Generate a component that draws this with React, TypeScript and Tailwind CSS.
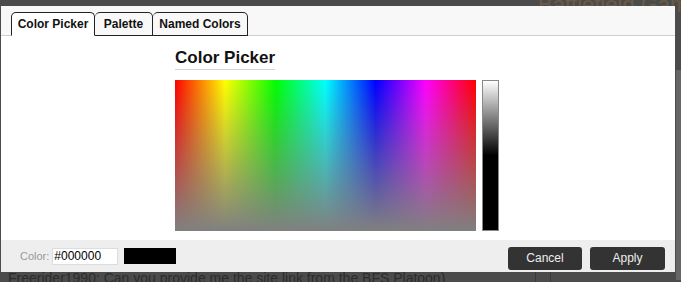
import { useState } from "react";

const tabs = [
  { label: "Color Picker", w: "w-[84px]" },
  { label: "Palette", w: "w-[58px]" },
  { label: "Named Colors", w: "w-[95px]" },
];

const App = () => {
  const [active, setActive] = useState(0);
  const [hex, setHex] = useState("#000000");

  return (
    <div className="relative w-[681px] h-[282px] overflow-hidden bg-[#4b4b4b] font-['Liberation_Sans',Arial,sans-serif]">
      {/* page behind the modal */}
      <div className="absolute left-[538px] top-[-8px] text-[22px] leading-[26px] text-[#6b5a45] whitespace-nowrap">Battlefield Game</div>
      <div className="absolute left-[8px] top-[269px] text-[14px] leading-[18px] text-[#2c2c2c] whitespace-nowrap">
        Freerider1990: Can you provide me the site link from the BFS Platoon)
      </div>
      <div className="absolute left-[535px] top-[272px] w-px h-[10px] bg-[#3a3a3a]" />
      <div className="absolute left-[550px] top-[272px] w-px h-[10px] bg-[#3a3a3a]" />
      <div className="absolute left-[676px] top-[70px] w-[5px] h-[210px] bg-[#666]" />

      {/* dialog */}
      <div className="absolute left-[1px] top-[6px] w-[674px] h-[266px] flex flex-col bg-white">
        <div className="h-[30px] bg-[#f8f8f8] border-b border-[#cfcfcf] flex items-end pl-[10px]">
          {tabs.map((t, i) => (
            <button
              key={t.label}
              onClick={() => setActive(i)}
              className={`${t.w} h-[24px] -mb-px text-[12px] font-bold text-[#111] border border-[#222] rounded-t-[5px] ${
                i === active ? "bg-white border-b-white" : "bg-[#f8f8f8] border-l-0"
              }`}
            >
              {t.label}
            </button>
          ))}
        </div>

        <div className="flex-1 pl-[174px] pt-[10px]">
          <h2 className="inline-block text-[17px] font-bold text-[#111] leading-[20px] pb-[1px] border-b border-[#d4d4d4]">
            Color Picker
          </h2>
          <div className="flex gap-[6px] mt-[10px]">
            <div className="relative w-[301px] h-[151px] bg-[linear-gradient(to_right,#ff0000,#ffff00,#00ff00,#00ffff,#0000ff,#ff00ff,#ff0000)]">
              <div className="absolute inset-0 bg-[linear-gradient(to_bottom,rgba(128,128,128,0),rgba(128,128,128,1))]" />
            </div>
            <div className="w-[17px] h-[151px] border border-[#888] bg-[linear-gradient(to_bottom,#ffffff,#000000_50%,#000000)]" />
          </div>
        </div>

        <div className="h-[32px] bg-[#eeeeee] flex items-center pl-[19px] pr-[10px]">
          <span className="text-[11px] text-[#999]">Color:</span>
          <input
            value={hex}
            onChange={(e) => setHex(e.target.value)}
            className="ml-[3px] w-[66px] h-[17px] bg-white border border-[#ddd] px-[1px] text-[12px] text-black outline-none"
          />
          <div className="ml-[6px] w-[52px] h-[16px]" style={{ background: hex }} />
          <div className="ml-auto flex gap-[8px] mt-[4px]">
            <button className="w-[74px] h-[23px] rounded-[3px] bg-[#333] text-[12px] text-[#eee]">Cancel</button>
            <button className="w-[75px] h-[23px] rounded-[3px] bg-[#333] text-[12px] text-[#eee]">Apply</button>
          </div>
        </div>
      </div>
    </div>
  );
};

export default App;
